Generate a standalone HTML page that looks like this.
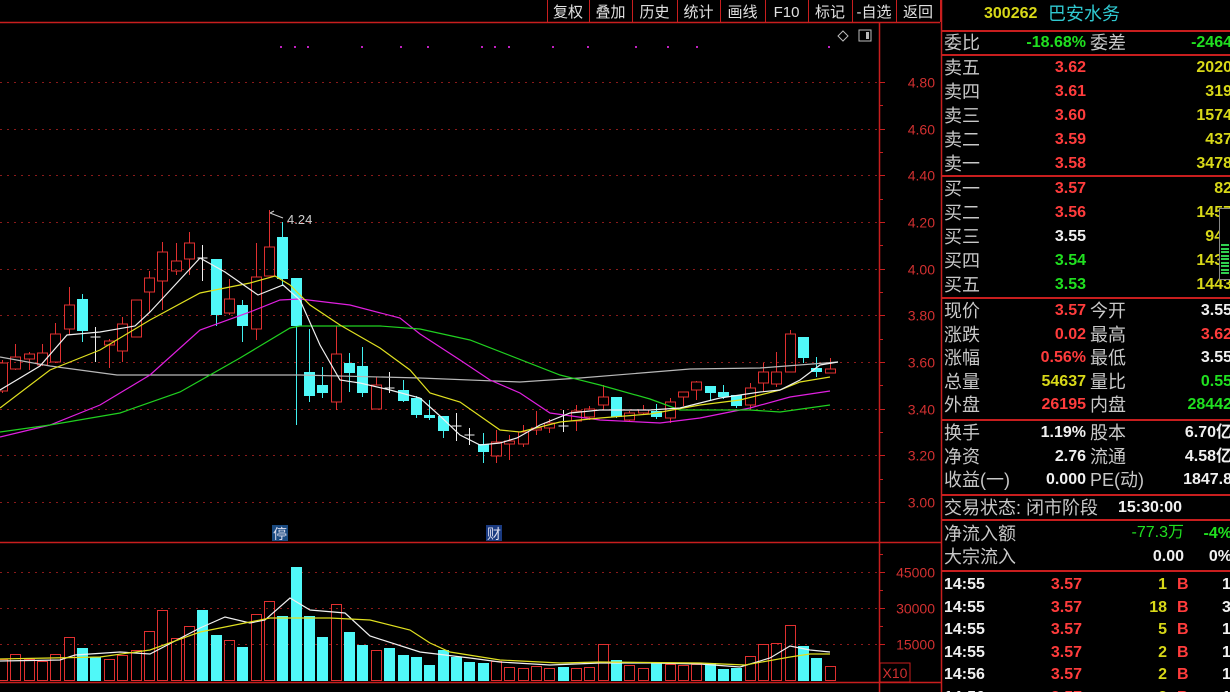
<!DOCTYPE html>
<html><head><meta charset="utf-8">
<style>
html,body{margin:0;padding:0;background:#000;width:1230px;height:692px;overflow:hidden}
body{position:relative;font-family:"Liberation Sans","Noto Sans CJK SC",sans-serif}
#c{position:absolute;left:0;top:0}
.t{position:absolute;white-space:nowrap;line-height:1}
.cn{font-size:18px;color:#c8c8c8}
.n{font-size:16px;font-weight:bold}
.r{color:#ff3c3c}.y{color:#d8d818}.g{color:#20e020}.w{color:#f0f0f0}
</style></head><body>
<svg id="c" width="1230" height="692" xmlns="http://www.w3.org/2000/svg"></svg>
<div id="p"></div>
<script>
var S='';
function L(x1,y1,x2,y2,c,w,d){S+='<line x1="'+x1+'" y1="'+y1+'" x2="'+x2+'" y2="'+y2+'" stroke="'+c+'" stroke-width="'+(w||1)+'"'+(d?' stroke-dasharray="'+d+'"':'')+'/>';}
function R(x,y,w,h,f,s){S+='<rect x="'+x+'" y="'+y+'" width="'+w+'" height="'+h+'" fill="'+(f||'none')+'"'+(s?' stroke="'+s+'"':'')+'/>';}
function T(x,y,t,c,sz,a,fw){S+='<text x="'+x+'" y="'+y+'" fill="'+c+'" font-size="'+sz+'" text-anchor="'+(a||'start')+'" font-family="Liberation Sans, Noto Sans CJK SC, sans-serif"'+(fw?' font-weight="bold"':'')+'>'+t+'</text>';}
function P(pts,c){S+='<polyline fill="none" stroke="'+c+'" stroke-width="1.2" points="'+pts.map(function(p){return p.join(',')}).join(' ')+'"/>';}
var RED='#c81e1e';
L(0,22.5,940,22.5,RED,1.5);
var tb=[[547,'复权'],[589,'叠加'],[632,'历史'],[677,'统计'],[720,'画线'],[765,'F10'],[808,'标记'],[852,'-自选'],[896,'返回']];
tb.forEach(function(b,i){L(b[0]+.5,0,b[0]+.5,22,RED,1);var nx=i<tb.length-1?tb[i+1][0]:940;T((b[0]+nx)/2,17,b[1],'#e0e0e0',15,'middle');});
L(940.5,0,940.5,22,RED,1);
[281,295,308,362,401,428,482,495,509,553,588,636,668,697,829].forEach(function(x){R(x-1,46,2,2,'#c020c0');});
S+='<path d="M843 31 L848 36 L843 41 L838 36Z" fill="none" stroke="#bbb"/>';
R(859,30,12,11,'none','#bbb');R(866,32,3,7,'#bbb');
function py(p){return 82+(4.80-p)*233.3;}
for(var p=4.8;p>2.99;p-=0.2){var y=Math.round(py(p))+.5;L(0,y,878,y,'#8a1a1a',1,'2 5');L(879,y,885,y,RED);T(935,y+5,p.toFixed(2),'#d03030',14,'end');var y2=Math.round(py(p-0.1))+.5;if(p>3.05)L(879,y2,883,y2,RED);}
L(879.5,22,879.5,692,RED,1.5);L(941.5,0,941.5,692,RED,1.5);
L(0,542.5,941,542.5,RED,1.5);L(0,682.5,941,682.5,RED,1.5);
[[572,'45000'],[608,'30000'],[644,'15000']].forEach(function(v){var y=v[0]+.5;L(0,y,878,y,'#8a1a1a',1,'2 5');L(879,y,885,y,RED);T(935,y+5,v[1],'#d03030',14,'end');L(879,y-18,883,y-18,RED);});
R(880,663,30,19,'none',RED);T(895,678,'X10','#d03030',14,'middle');
var C=[['r',363,391,360,393],['r',357,369,344,370],['r',354,359,352,370],['r',353,365,344,366],['r',334,362,323,363],['r',305,329,287,335],['c',299,331,294,342],['x',337,337,327,362],['r',341,345,339,368],['r',324,351,317,362],['r',300,337,300,337],['r',278,292,271,313],['r',252,281,242,310],['r',261,271,243,275],['r',243,259,232,275],['x',258,258,245,281],['c',259,315,259,326],['r',299,313,279,315],['c',305,326,300,342],['r',277,329,243,340],['r',247,276,210,276],['c',237,279,222,286],['c',278,326,278,425],['c',372,396,329,402],['c',385,393,367,398],['r',354,402,326,410],['c',363,373,353,392],['c',366,393,347,397],['r',385,409,377,409],['x',388,388,372,393],['c',390,401,380,402],['c',398,415,396,418],
['c',415,418,400,420],['c',416,431,416,438],['x',426,426,413,441],['x',435,435,428,445],['c',444,452,433,463],['r',442,456,430,463],['r',441,444,435,460],['r',432,444,425,447],['r',428,430,411,435],['r',423,428,419,433],['x',426,426,410,432],['r',411,421,405,431],['r',409,417,406,420],['r',397,405,385,410],['c',397,417,397,418],['r',413,420,411,421],['r',410,413,405,414],['c',411,417,404,419],['r',402,418,398,423],['r',392,397,392,406],['r',382,390,381,400],['c',386,393,386,400],['c',392,397,385,399],['c',395,406,395,408],['r',388,405,383,410],['r',372,383,363,392],['r',372,384,352,387],['r',334,372,330,372],['c',337,358,337,363],['c',368,372,357,377],['r',369,373,358,373]];
C.forEach(function(c,i){var x=Math.round(2+13.35*i)+.5;
 if(c[0]=='r'){L(x,c[3],x,c[1],'#e03030');L(x,c[2],x,c[4],'#e03030');R(x-5,c[1],10,Math.max(c[2]-c[1],1),'none','#e03030');}
 else if(c[0]=='c'){L(x,c[3],x,c[4],'#40f0f0');R(x-5.5,c[1],11,Math.max(c[2]-c[1],2),'#50f8f8');}
 else{L(x,c[3],x,c[4],'#f0f0f0');L(x-5,c[1],x+5,c[1],'#f0f0f0');}
});
P([[0,357],[50,366],[117,375],[300,375],[420,378],[520,382],[580,378],[690,369],[760,368],[838,362]],'#b8b8b8');
P([[0,437],[50,425],[100,405],[150,375],[200,330],[250,312],[280,300],[300,299],[350,305],[400,318],[420,334],[460,360],[490,380],[520,393],[550,413],[600,420],[660,423],[700,418],[750,408],[790,397],[830,391]],'#e020e0');
P([[0,432],[50,425],[120,413],[180,392],[240,358],[290,328],[300,326],[380,326],[420,329],[470,340],[560,375],[600,385],[650,399],[680,410],[750,410],[780,412],[830,405]],'#20d020');
P([[0,408],[50,370],[100,350],[150,320],[200,293],[250,283],[275,276],[290,285],[310,305],[340,325],[380,348],[410,370],[430,393],[460,402],[500,430],[520,432],[560,422],[600,418],[650,414],[700,405],[740,400],[780,390],[800,382],[830,377]],'#e0e020');
P([[0,390],[40,366],[67,335],[100,332],[135,326],[150,312],[200,258],[225,272],[258,295],[283,285],[300,300],[320,345],[340,380],[360,383],[390,390],[420,398],[440,416],[460,435],[480,445],[500,443],[517,438],[540,425],[570,413],[600,410],[650,410],[680,408],[720,398],[760,392],[780,390],[800,380],[820,365],[838,362]],'#f0f0f0');
L(270,213,283,218,'#ccc');L(270,213,274,211,'#ccc');T(287,224,'4.24','#d0d0d0',13);
R(272,525,16,16,'#1a4a80');T(280,539,'停','#dde',14,'middle');
R(486,525,16,16,'#1a3a80');T(494,539,'财','#dde',14,'middle');
var V=[[0,'r',358],[18,'r',342],[36,'r',358],[60,'r',362],[82,'r',342],[103,'r',292],[126,'c',325],[148,'c',352],[170,'r',356],[192,'r',345],[215,'r',330],[237,'r',273],[259,'r',210],[282,'r',293],[305,'r',258],[327,'c',210],[349,'c',285],[371,'r',300],[393,'c',322],[415,'r',222],[438,'r',183],[460,'c',228],[482,'c',82],[505,'c',228],[527,'c',292],[549,'r',192],[571,'c',277],[594,'c',315],[616,'r',330],[638,'c',325],[660,'c',345],[682,'c',352],[705,'c',375],[727,'c',330],[749,'c',352],[771,'c',367],[793,'c',370],[816,'r',363],[838,'r',380],[860,'r',383],[882,'r',378],[904,'r',383],[927,'c',380],[949,'r',383],[971,'r',380],[994,'r',312],[1016,'c',360],[1038,'r',375],[1060,'r',385],[1083,'c',368],[1105,'r',372],[1127,'r',375],[1150,'r',372],[1172,'c',370],[1194,'c',388],[1216,'c',385],[1239,'r',348],[1261,'r',312],[1283,'r',308],[1305,'r',255],[1327,'c',318],[1350,'c',355],[1372,'r',378]];
V.forEach(function(v,i){var x=Math.round(2+13.35*i)-5,t=Math.round(540+v[2]/3);
 if(v[1]=='r')R(x+.5,t+.5,10,680-t,'none','#e03030');else R(x,t,11,681-t,'#50f8f8');});
P([[0,661],[60,660],[75,655],[120,652],[150,654],[200,628],[225,617],[250,623],[265,620],[290,598],[310,610],[345,613],[370,636],[420,652],[470,658],[500,662],[550,665],[600,663],[650,663],[700,664],[740,667],[770,658],[790,646],[810,650],[830,652]],'#f0f0f0');
P([[0,659],[100,657],[150,650],[200,632],[270,618],[300,618],[330,618],[370,620],[410,630],[430,643],[450,652],[500,660],[560,663],[600,662],[700,663],[745,665],[790,657],[810,654],[830,654]],'#e0e020');
document.getElementById('c').innerHTML=S;
var H='';
function t(x,y,txt,cls,al){H+='<div class="t '+cls+'" style="'+(al?'right:'+(1230-x)+'px':'left:'+x+'px')+';top:'+y+'px">'+txt+'</div>';}
function hl(y){H+='<div style="position:absolute;left:942px;top:'+y+'px;width:288px;height:1.5px;background:#c81e1e"></div>';}
t(984,6,'300262','n y');H+='<div class="t" style="left:1048px;top:5px;font-size:18px;color:#30c8d0">巴安水务</div>';
hl(30);
t(944,34,'委比','cn');t(1086,35,'-18.68%','n g',1);t(1090,34,'委差','cn');t(1232,35,'-2464','n g',1);
hl(54);
var asks=[['卖五','3.62','2020'],['卖四','3.61','319'],['卖三','3.60','1574'],['卖二','3.59','437'],['卖一','3.58','3478']];
asks.forEach(function(a,i){var y=59+i*24;t(944,y,a[0],'cn');t(1086,y+1,a[1],'n r',1);t(1232,y+1,a[2],'n y',1);});
hl(175);
var bids=[['买一','3.57','r','82'],['买二','3.56','r','1457'],['买三','3.55','w','948'],['买四','3.54','g','1431'],['买五','3.53','g','1443']];
bids.forEach(function(a,i){var y=180+i*24;t(944,y,a[0],'cn');t(1086,y+1,a[1],'n '+a[2],1);t(1232,y+1,a[3],'n y',1);});
H+='<div style="position:absolute;left:1219px;top:208px;width:10px;height:70px;border:1px solid #888;background:#000"></div>';
for(var k=0;k<9;k++)H+='<div style="position:absolute;left:1221px;top:'+(244+k*3.5)+'px;width:8px;height:2px;background:#30d050"></div>';
hl(297);
var q=[['现价','3.57','r','今开','3.55','w'],['涨跌','0.02','r','最高','3.62','r'],['涨幅','0.56%','r','最低','3.55','w'],['总量','54637','y','量比','0.55','g'],['外盘','26195','r','内盘','28442','g']];
q.forEach(function(a,i){var y=302+i*23.5;t(944,y,a[0],'cn');t(1086,y+1,a[1],'n '+a[2],1);t(1090,y,a[3],'cn');t(1232,y+1,a[4],'n '+a[5],1);});
hl(419);
var q2=[['换手','1.19%','股本','6.70亿'],['净资','2.76','流通','4.58亿'],['收益(一)','0.000','PE(动)','1847.8']];
q2.forEach(function(a,i){var y=424+i*23.5;t(944,y,a[0],'cn');t(1086,y+1,a[1],'n w',1);t(1090,y,a[2],'cn');t(1232,y+1,a[3],'n w',1);});
hl(494);
t(944,499,'交易状态: 闭市阶段','cn');t(1118,500,'15:30:00','n w');
hl(519);
t(944,525,'净流入额','cn');H+='<div class="t g" style="right:46px;top:525px;font-size:16px">-77.3万</div>';t(1232,526,'-4%','n g',1);
t(944,548,'大宗流入','cn');t(1184,549,'0.00','n w',1);t(1232,549,'0%','n w',1);
hl(570);
var tk=[['14:55','1','1'],['14:55','18','3'],['14:55','5','1'],['14:55','2','1'],['14:56','2','1'],['14:56','2','1']];
tk.forEach(function(a,i){var y=577+i*22.5;t(944,y,a[0],'n w');t(1082,y,'3.57','n r',1);t(1167,y,a[1],'n y',1);t(1177,y,'B','n r');t(1222,y,a[2],'n w');});
document.getElementById('p').innerHTML=H;
</script>
</body></html>
